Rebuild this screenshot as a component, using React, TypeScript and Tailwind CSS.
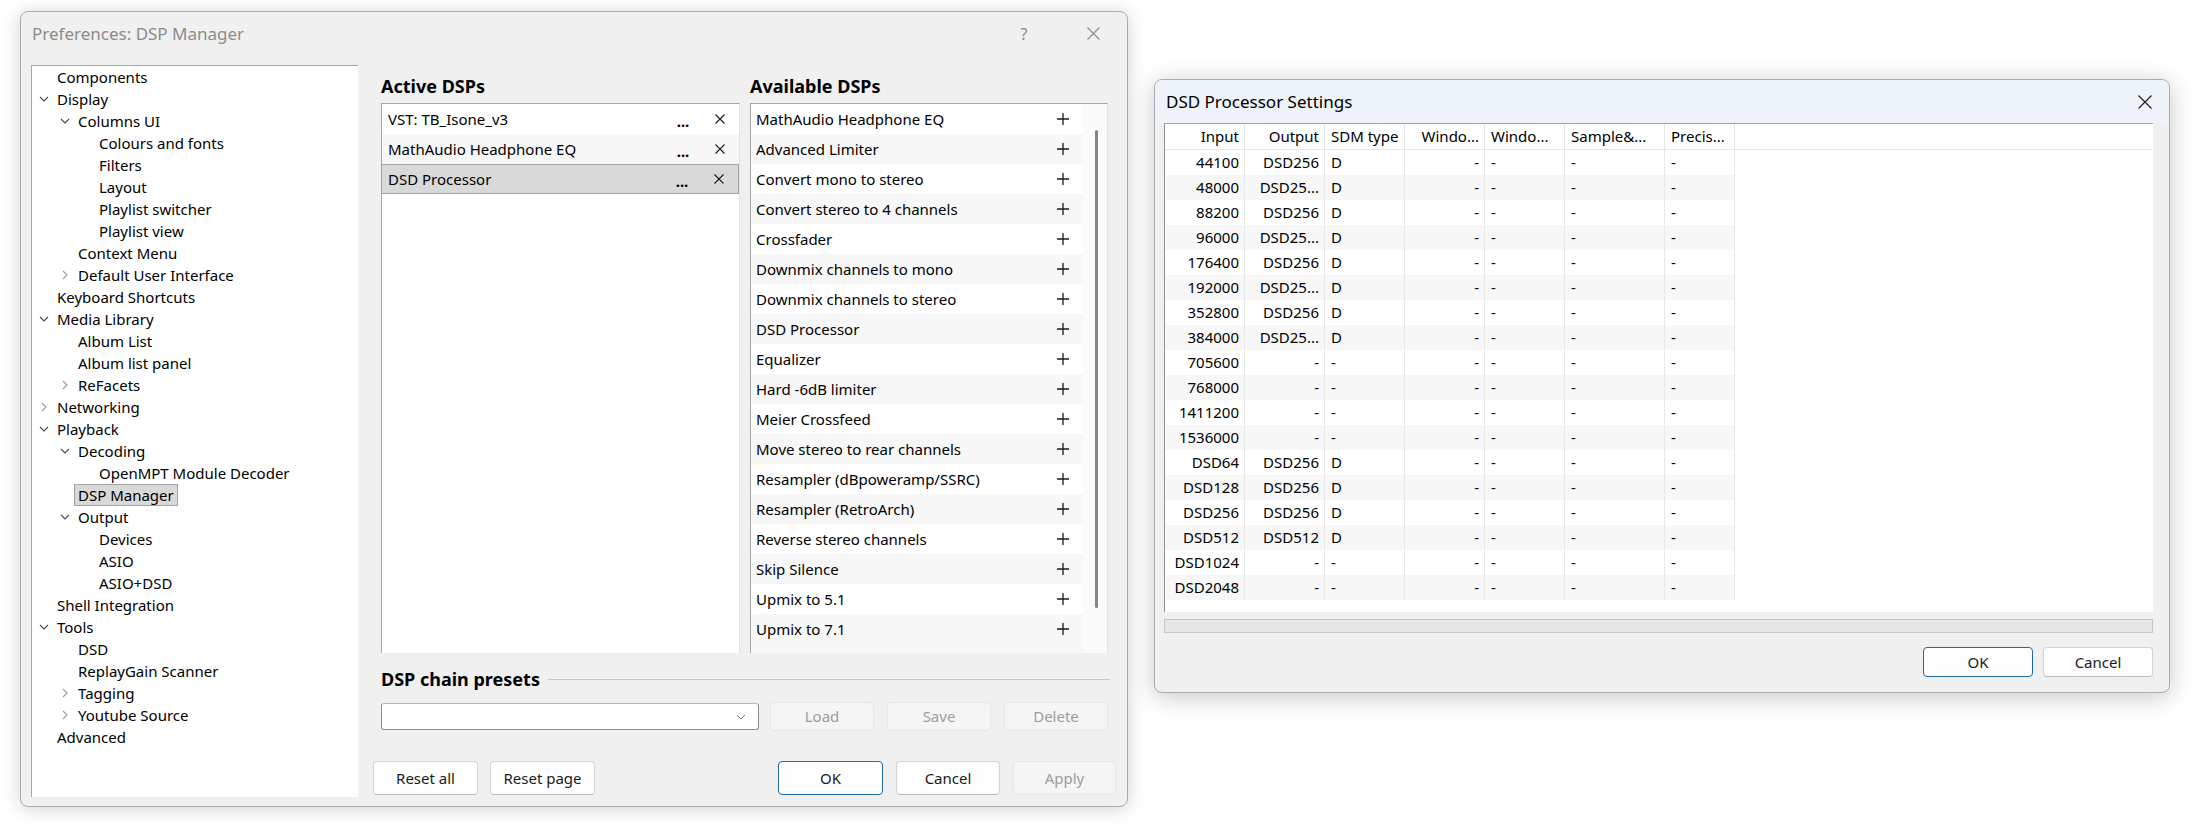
import React from 'react'

type TreeItem = { label: string; level: number; chevron?: 'down' | 'right'; selected?: boolean }

const treeItems: TreeItem[] = [
  { label: 'Components', level: 0 },
  { label: 'Display', level: 0, chevron: 'down' },
  { label: 'Columns UI', level: 1, chevron: 'down' },
  { label: 'Colours and fonts', level: 2 },
  { label: 'Filters', level: 2 },
  { label: 'Layout', level: 2 },
  { label: 'Playlist switcher', level: 2 },
  { label: 'Playlist view', level: 2 },
  { label: 'Context Menu', level: 1 },
  { label: 'Default User Interface', level: 1, chevron: 'right' },
  { label: 'Keyboard Shortcuts', level: 0 },
  { label: 'Media Library', level: 0, chevron: 'down' },
  { label: 'Album List', level: 1 },
  { label: 'Album list panel', level: 1 },
  { label: 'ReFacets', level: 1, chevron: 'right' },
  { label: 'Networking', level: 0, chevron: 'right' },
  { label: 'Playback', level: 0, chevron: 'down' },
  { label: 'Decoding', level: 1, chevron: 'down' },
  { label: 'OpenMPT Module Decoder', level: 2 },
  { label: 'DSP Manager', level: 1, selected: true },
  { label: 'Output', level: 1, chevron: 'down' },
  { label: 'Devices', level: 2 },
  { label: 'ASIO', level: 2 },
  { label: 'ASIO+DSD', level: 2 },
  { label: 'Shell Integration', level: 0 },
  { label: 'Tools', level: 0, chevron: 'down' },
  { label: 'DSD', level: 1 },
  { label: 'ReplayGain Scanner', level: 1 },
  { label: 'Tagging', level: 1, chevron: 'right' },
  { label: 'Youtube Source', level: 1, chevron: 'right' },
  { label: 'Advanced', level: 0 },
]

const activeDsps = ['VST: TB_Isone_v3', 'MathAudio Headphone EQ', 'DSD Processor']

const availableDsps = [
  'MathAudio Headphone EQ',
  'Advanced Limiter',
  'Convert mono to stereo',
  'Convert stereo to 4 channels',
  'Crossfader',
  'Downmix channels to mono',
  'Downmix channels to stereo',
  'DSD Processor',
  'Equalizer',
  'Hard -6dB limiter',
  'Meier Crossfeed',
  'Move stereo to rear channels',
  'Resampler (dBpoweramp/SSRC)',
  'Resampler (RetroArch)',
  'Reverse stereo channels',
  'Skip Silence',
  'Upmix to 5.1',
  'Upmix to 7.1',
]

const dsdRows: [string, string, string][] = [
  ['44100', 'DSD256', 'D'],
  ['48000', 'DSD25...', 'D'],
  ['88200', 'DSD256', 'D'],
  ['96000', 'DSD25...', 'D'],
  ['176400', 'DSD256', 'D'],
  ['192000', 'DSD25...', 'D'],
  ['352800', 'DSD256', 'D'],
  ['384000', 'DSD25...', 'D'],
  ['705600', '-', '-'],
  ['768000', '-', '-'],
  ['1411200', '-', '-'],
  ['1536000', '-', '-'],
  ['DSD64', 'DSD256', 'D'],
  ['DSD128', 'DSD256', 'D'],
  ['DSD256', 'DSD256', 'D'],
  ['DSD512', 'DSD512', 'D'],
  ['DSD1024', '-', '-'],
  ['DSD2048', '-', '-'],
]

const ChevronDown = () => (
  <svg width="10" height="6" viewBox="0 0 10 6">
    <path d="M1 1l4 4 4-4" stroke="#4a4a4a" strokeWidth="1.1" fill="none" />
  </svg>
)

const ChevronRight = () => (
  <svg width="6" height="10" viewBox="0 0 6 10">
    <path d="M1 1l4 4-4 4" stroke="#9a9a9a" strokeWidth="1.1" fill="none" />
  </svg>
)

const CloseIcon = ({ size, color }: { size: number; color: string }) => (
  <svg width={size} height={size} viewBox={`0 0 ${size} ${size}`}>
    <path d={`M0.5 0.5L${size - 0.5} ${size - 0.5}M${size - 0.5} 0.5L0.5 ${size - 0.5}`} stroke={color} strokeWidth="1.1" fill="none" />
  </svg>
)

const PlusIcon = () => (
  <svg width="12" height="12" viewBox="0 0 12 12">
    <path d="M6 0v12M0 6h12" stroke="#1a1a1a" strokeWidth="1.3" fill="none" />
  </svg>
)

const Button = ({ label, width, primary, disabled, height = 'h-[34px]' }: { label: string; width: string; primary?: boolean; disabled?: boolean; height?: string }) => (
  <div
    className={`${width} ${height} flex items-center justify-center rounded-[4px] border text-[15px] ${
      disabled
        ? 'bg-[#f5f5f5] border-[#e6e6e6] text-[#9d9d9d]'
        : primary
          ? 'bg-[#fdfdfd] border-[#1f6aa8] text-[#1a1a1a]'
          : 'bg-[#fdfdfd] border-[#d3d3d3] border-b-[#bdbdbd] text-[#1a1a1a]'
    }`}
  >
    {label}
  </div>
)

const DspTree = () => (
  <div className="w-[327px] h-[732px] bg-white border-l border-t border-[#a6a6a6] text-[15px] text-black">
    {treeItems.map((item) => (
      <div key={item.label} className="h-[22px] flex items-center" style={{ paddingLeft: 5 + item.level * 21 }}>
        <div className="w-[14px] h-[22px] flex items-center justify-center mr-[6px]">
          {item.chevron === 'down' && <ChevronDown />}
          {item.chevron === 'right' && <ChevronRight />}
        </div>
        {item.selected ? (
          <span className="-ml-[4px] px-[3px] h-[22px] flex items-center bg-[#d9d9d9] border border-[#a3a3a3]">{item.label}</span>
        ) : (
          <span>{item.label}</span>
        )}
      </div>
    ))}
  </div>
)

const PreferencesWindow = () => (
  <div className="ml-[20px] mt-[11px] w-[1108px] h-[796px] flex flex-col rounded-[8px] border border-[#ababab] bg-[#f0f0f0] shadow-[0_2px_18px_rgba(0,0,0,0.18)]">
    {/* Title bar */}
    <div className="h-[43px] flex items-center pl-[11px] text-[17px] text-[#8c8c8c]">
      <span>Preferences: DSP Manager</span>
      <span className="ml-auto w-[14px] text-center text-[16px] text-[#8c8c8c]">?</span>
      <div className="ml-[56px] mr-[27px] flex items-center">
        <CloseIcon size={13} color="#8c8c8c" />
      </div>
    </div>

    <div className="flex-1 flex pt-[10px] pl-[10px]">
      <DspTree />

      <div className="flex-1 flex flex-col pl-[23px] pr-[19px]">
        <div className="mt-[11px] h-[20px] flex gap-[10px] text-[18px] leading-[20px] font-bold text-black">
          <div className="w-[359px] flex items-center">Active DSPs</div>
          <div className="w-[358px] flex items-center">Available DSPs</div>
        </div>

        <div className="mt-[7px] h-[550px] flex gap-[10px]">
          {/* Active list */}
          <div className="w-[359px] h-[550px] bg-white border-l border-t border-r border-[#a6a6a6] border-r-[#e2e2e2] text-[15px] text-black">
            {activeDsps.map((name, i) => {
              const selected = i === 2
              return (
                <div
                  key={name}
                  className={`h-[30px] flex items-center pl-[6px] ${
                    selected ? 'bg-[#d9d9d9] border border-[#a3a3a3] -ml-px' : i % 2 === 1 ? 'bg-[#f7f7f7]' : 'bg-white'
                  }`}
                >
                  <span className="flex-1">{name}</span>
                  <span className="w-[24px] text-center font-bold leading-none pt-[4px]">...</span>
                  <div className="ml-[17px] mr-[11px] w-[16px] flex items-center justify-center">
                    <CloseIcon size={10} color="#1a1a1a" />
                  </div>
                </div>
              )
            })}
          </div>

          {/* Available list */}
          <div className="w-[358px] h-[550px] flex bg-white border-l border-t border-r border-[#a6a6a6] border-r-[#e2e2e2] overflow-hidden text-[15px] text-black">
            <div className="flex-1">
              {availableDsps.map((name, i) => (
                <div key={name} className={`h-[30px] flex items-center pl-[5px] ${i % 2 === 1 ? 'bg-[#f7f7f7]' : 'bg-white'}`}>
                  <span className="flex-1">{name}</span>
                  <div className="w-[14px] mr-[13px] flex items-center justify-center">
                    <PlusIcon />
                  </div>
                </div>
              ))}
              {/* next row, scrolled out of view */}
              <div className="h-[30px] bg-[#f7f7f7]" />
            </div>
            <div className="w-[24px] pt-[26px] bg-[#fbfbfb]">
              <div className="ml-[12px] w-[3px] h-[478px] rounded-full bg-[#858585]" />
            </div>
          </div>
        </div>

        {/* DSP chain presets */}
        <div className="mt-[16px] h-[20px] flex items-center text-[18px] leading-[20px] font-bold text-black">
          <span>DSP chain presets</span>
          <div className="flex-1 ml-[8px] -mr-[2px] h-px bg-[#c6c6c6]" />
        </div>

        <div className="mt-[13px] h-[29px] flex items-center">
          <div className="w-[378px] h-[27px] bg-white border border-[#8c8c8c] border-t-[#b9b9b9] rounded-[3px] flex items-center justify-end pr-[12px]">
            <svg width="10" height="6" viewBox="0 0 10 6">
              <path d="M1 1l4 4 4-4" stroke="#7a7a7a" strokeWidth="1" fill="none" />
            </svg>
          </div>
          <div className="ml-[11px]">
            <Button label="Load" width="w-[104px]" height="h-[29px]" disabled />
          </div>
          <div className="ml-[13px]">
            <Button label="Save" width="w-[104px]" height="h-[29px]" disabled />
          </div>
          <div className="ml-[13px]">
            <Button label="Delete" width="w-[104px]" height="h-[29px]" disabled />
          </div>
        </div>

        {/* Bottom buttons */}
        <div className="mt-[30px] -ml-[8px] -mr-[8px] flex">
          <Button label="Reset all" width="w-[105px]" />
          <div className="ml-[12px]">
            <Button label="Reset page" width="w-[105px]" />
          </div>
          <div className="ml-auto">
            <Button label="OK" width="w-[105px]" primary />
          </div>
          <div className="ml-[13px]">
            <Button label="Cancel" width="w-[104px]" />
          </div>
          <div className="ml-[13px]">
            <Button label="Apply" width="w-[103px]" disabled />
          </div>
        </div>
      </div>
    </div>
  </div>
)

const columns = [
  { title: 'Input', width: 'w-[80px]', align: 'right' },
  { title: 'Output', width: 'w-[80px]', align: 'right' },
  { title: 'SDM type', width: 'w-[80px]', align: 'left' },
  { title: 'Windo...', width: 'w-[80px]', align: 'right' },
  { title: 'Windo...', width: 'w-[80px]', align: 'left' },
  { title: 'Sample&...', width: 'w-[100px]', align: 'left' },
  { title: 'Precis...', width: 'w-[70px]', align: 'left' },
]

const DsdWindow = () => (
  <div className="ml-[26px] mt-[79px] w-[1016px] h-[614px] flex flex-col rounded-[8px] border border-[#a9acb0] bg-[#f0f0f0] overflow-hidden shadow-[0_4px_24px_rgba(0,0,0,0.22)]">
    <div className="h-[43px] flex items-center pl-[11px] bg-[#eef3f9] text-[17px] text-black">
      <span>DSD Processor Settings</span>
      <div className="ml-auto mr-[17px] flex items-center">
        <CloseIcon size={14} color="#1a1a1a" />
      </div>
    </div>

    <div className="flex-1 flex flex-col pl-[9px] pr-[16px]">
      <div className="w-[989px] h-[489px] bg-white border-l border-t border-[#8f8f8f] border-t-[#a3a3a3] text-[15px] text-black">
        {/* Header */}
        <div className="h-[26px] flex border-b border-[#e5e5e5]">
          {columns.map((c, i) => (
            <div
              key={i}
              className={`${c.width} h-full flex items-center border-r border-[#e5e5e5] ${
                c.align === 'right' ? 'justify-end pr-[5px]' : 'justify-start pl-[6px]'
              }`}
            >
              {c.title}
            </div>
          ))}
        </div>
        {dsdRows.map(([input, output, sdm], r) => {
          const cells = [input, output, sdm, '-', '-', '-', '-']
          return (
            <div key={r} className="h-[25px] flex">
              {columns.map((c, i) => (
                <div
                  key={i}
                  className={`${c.width} h-full flex items-center border-r border-[#e8e8e8] ${r % 2 === 1 ? 'bg-[#f7f7f7]' : 'bg-white'} ${
                    c.align === 'right' ? 'justify-end pr-[5px]' : 'justify-start pl-[6px]'
                  }`}
                >
                  {cells[i]}
                </div>
              ))}
            </div>
          )
        })}
      </div>

      <div className="mt-[7px] w-[989px] h-[14px] bg-[#e6e6e6] border border-[#c7c7c7]" />

      <div className="mt-[14px] flex justify-end w-[989px]">
        <Button label="OK" width="w-[110px]" height="h-[30px]" primary />
        <div className="ml-[10px]">
          <Button label="Cancel" width="w-[110px]" height="h-[30px]" />
        </div>
      </div>
    </div>
  </div>
)

export default function App() {
  return (
    <div className="w-[2208px] h-[826px] bg-white flex items-start overflow-hidden font-['Noto_Sans',sans-serif]">
      <PreferencesWindow />
      <DsdWindow />
    </div>
  )
}
